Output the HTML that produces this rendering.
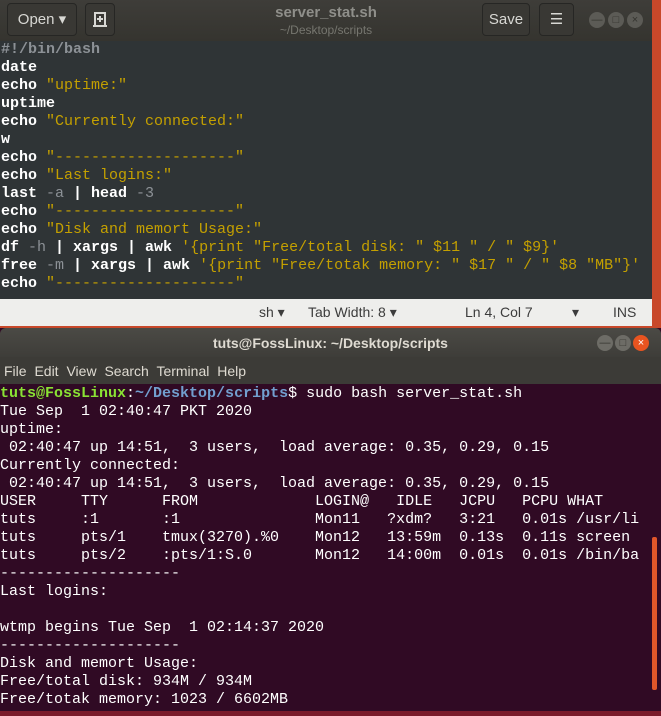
<!DOCTYPE html>
<html><head><meta charset="utf-8"><style>
*{margin:0;padding:0;box-sizing:border-box}
body{width:661px;height:716px;overflow:hidden;background:#c8482a;position:relative;font-family:"Liberation Sans",sans-serif}
#ed{position:absolute;left:0;top:0;width:652px;height:326px;background:#2f3436}
#hb{position:absolute;left:0;top:0;width:652px;height:41px;background:linear-gradient(#3e3d39,#35342f)}
.btn{position:absolute;top:3px;height:33px;border:1px solid #262624;border-radius:4px;background:#393834;color:#d8d8d4;font-size:15px;line-height:31px;text-align:center}
.wc{position:absolute;width:16px;height:16px;border-radius:50%;background:#5c5b56;color:#35342f;font-size:11px;line-height:16px;text-align:center}
#code{position:absolute;left:1px;top:41px;font-family:"Liberation Mono",monospace;font-size:15px;line-height:18px;color:#fff;font-weight:bold;white-space:pre}
.c{color:#8c9196}.s{color:#c4a000;font-weight:normal}.o{color:#8c9196;font-weight:normal}
#sb{position:absolute;left:0;top:299px;width:652px;height:27px;background:#eeeeec;color:#3c3c3c;font-size:14px}
#sb span{position:absolute;top:5px}
#term{position:absolute;left:0;top:328px;width:661px;height:383px;background:#300a24}
#tt{position:absolute;left:0;top:0;width:661px;height:29px;background:linear-gradient(#4b4a45,#3e3d39);border-radius:6px 6px 0 0;color:#dfdbd2;font-weight:bold;font-size:14px;line-height:30px;text-align:center}
#mb{position:absolute;left:0;top:29px;width:661px;height:27px;background:#3c3b37;color:#dfdbd2;font-size:14px;line-height:28px;padding-left:4px;word-spacing:4px}
#out{position:absolute;left:0;top:57px;font-family:"Liberation Mono",monospace;font-size:15px;line-height:18px;color:#fff;white-space:pre}
.g{color:#8ae234;font-weight:bold}.b{color:#729fcf;font-weight:bold}
</style></head><body>
<div id="ed">
<div id="hb">
<div class="btn" style="left:7px;width:70px">Open ▾</div>
<div class="btn" style="left:85px;width:30px;left:85px"><svg width="16" height="18" viewBox="0 0 16 18" style="margin-top:7px"><path d="M3 2h10v13H3z M1 15h14" stroke="#d8d8d4" stroke-width="2" fill="none"/><path d="M8 5v6M5 8h6" stroke="#d8d8d4" stroke-width="2"/></svg></div>
<div style="position:absolute;left:0;width:652px;top:4px;text-align:center;color:#8f8f8a;font-weight:bold;font-size:15px">server_stat.sh</div>
<div style="position:absolute;left:0;width:652px;top:23px;text-align:center;color:#76766f;font-size:12px">~/Desktop/scripts</div>
<div class="btn" style="left:482px;width:48px">Save</div>
<div class="btn" style="left:539px;width:35px">☰</div>
<div class="wc" style="left:589px;top:12px">—</div>
<div class="wc" style="left:608px;top:12px">□</div>
<div class="wc" style="left:627px;top:12px">×</div>
</div>
<div id="code"><span class="c">#!/bin/bash</span>
date
echo <span class="s">"uptime:"</span>
uptime
echo <span class="s">"Currently connected:"</span>
w
echo <span class="s">"--------------------"</span>
echo <span class="s">"Last logins:"</span>
last <span class="o">-a</span> | head <span class="o">-3</span>
echo <span class="s">"--------------------"</span>
echo <span class="s">"Disk and memort Usage:"</span>
df <span class="o">-h</span> | xargs | awk <span class="s">'{print "Free/total disk: " $11 " / " $9}'</span>
free <span class="o">-m</span> | xargs | awk <span class="s">'{print "Free/totak memory: " $17 " / " $8 "MB"}'</span>
echo <span class="s">"--------------------"</span></div>
<div id="sb"><span style="left:259px">sh ▾</span><span style="left:308px">Tab Width: 8 ▾</span><span style="left:465px">Ln 4, Col 7</span><span style="left:572px">▾</span><span style="left:613px">INS</span></div>
</div>
<div id="term">
<div id="tt">tuts@FossLinux: ~/Desktop/scripts</div>
<div class="wc" style="left:597px;top:7px;background:#6d6c66">—</div>
<div class="wc" style="left:615px;top:7px;background:#6d6c66">□</div>
<div class="wc" style="left:633px;top:7px;background:#e95420;color:#fff">×</div>
<div id="mb">File Edit View Search Terminal Help</div>
<div id="out"><span class="g">tuts@FossLinux</span>:<span class="b">~/Desktop/scripts</span>$ sudo bash server_stat.sh
Tue Sep  1 02:40:47 PKT 2020
uptime:
 02:40:47 up 14:51,  3 users,  load average: 0.35, 0.29, 0.15
Currently connected:
 02:40:47 up 14:51,  3 users,  load average: 0.35, 0.29, 0.15
USER     TTY      FROM             LOGIN@   IDLE   JCPU   PCPU WHAT
tuts     :1       :1               Mon11   ?xdm?   3:21   0.01s /usr/li
tuts     pts/1    tmux(3270).%0    Mon12   13:59m  0.13s  0.11s screen
tuts     pts/2    :pts/1:S.0       Mon12   14:00m  0.01s  0.01s /bin/ba
--------------------
Last logins:

wtmp begins Tue Sep  1 02:14:37 2020
--------------------
Disk and memort Usage:
Free/total disk: 934M / 934M
Free/totak memory: 1023 / 6602MB</div>
<div style="position:absolute;left:652px;top:209px;width:5px;height:153px;background:#e0562a;border-radius:2px"></div>
</div>
<div style="position:absolute;left:0;top:711px;width:661px;height:5px;background:#7a1a2a"></div>
</body></html>
